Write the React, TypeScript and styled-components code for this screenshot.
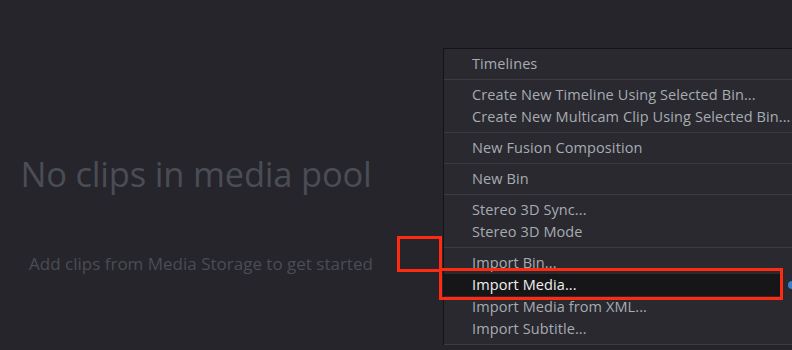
import styled, { createGlobalStyle } from 'styled-components';

interface MenuItem {
  label: string;
  active?: boolean;
}

const groups: MenuItem[][] = [
  [{ label: 'Timelines' }],
  [
    { label: 'Create New Timeline Using Selected Bin...' },
    { label: 'Create New Multicam Clip Using Selected Bin...' },
  ],
  [{ label: 'New Fusion Composition' }],
  [{ label: 'New Bin' }],
  [{ label: 'Stereo 3D Sync...' }, { label: 'Stereo 3D Mode' }],
  [
    { label: 'Import Bin...' },
    { label: 'Import Media...', active: true },
    { label: 'Import Media from XML...' },
    { label: 'Import Subtitle...' },
  ],
];

const App = () => {
  return (
    <>
      <GlobalStyle />
      <Page>
        <EmptyPool>
          <Title>No clips in media pool</Title>
          <Hint>Add clips from Media Storage to get started</Hint>
        </EmptyPool>

        <ContextMenu>
          {groups.map((group, gi) => (
            <Group key={gi}>
              {group.map(item => (
                <Item key={item.label} active={item.active}>
                  {item.label}
                </Item>
              ))}
            </Group>
          ))}
        </ContextMenu>

        <ScrollDot />
        {/* red annotation boxes drawn over the screenshot */}
        <Marker style={{ left: 397, top: 236, width: 45, height: 36 }} />
        <Marker style={{ left: 439, top: 268, width: 344, height: 32 }} />
      </Page>
    </>
  );
};

const GlobalStyle = createGlobalStyle`
  html, body {
    margin: 0;
    padding: 0;
    background: #25252b;
    overflow: hidden;
  }
  * {
    box-sizing: border-box;
  }
`;

const Page = styled.div`
  position: relative;
  width: 792px;
  height: 350px;
  background: #25252b;
  font-family: 'Open Sans', 'Liberation Sans', sans-serif;
  overflow: hidden;
  display: flex;
`;

const EmptyPool = styled.div`
  width: 392px;
  display: flex;
  flex-direction: column;
  align-items: center;
  padding-top: 150px;
  color: #4a4d55;
`;

const Title = styled.div`
  font-size: 34.5px;
  font-weight: 400;
  line-height: 48px;
  letter-spacing: -0.2px;
`;

const Hint = styled.div`
  margin-top: 54px;
  margin-left: 10px;
  font-size: 17px;
  line-height: 24px;
`;

const ContextMenu = styled.div`
  position: absolute;
  left: 443px;
  top: 48px;
  width: 380px;
  background: #29292f;
  border-top: 1px solid #141417;
  border-left: 1px solid #141417;
`;

const Group = styled.div`
  padding: 4px 0;
  border-bottom: 1px solid #3c3c42;
`;

const Item = styled.div<{ active?: boolean }>`
  height: 22px;
  line-height: 22px;
  padding-left: 28px;
  margin-right: ${props => (props.active ? '42px' : '0')};
  font-size: 14.5px;
  letter-spacing: 0.1px;
  white-space: nowrap;
  color: ${props => (props.active ? '#f0f0f0' : '#a7acb3')};
  background: ${props => (props.active ? '#161618' : 'transparent')};
`;

const Marker = styled.div`
  position: absolute;
  border: 3px solid #ff2a12;
  pointer-events: none;
`;

const ScrollDot = styled.div`
  position: absolute;
  left: 788px;
  top: 281px;
  width: 8px;
  height: 8px;
  border-radius: 50%;
  background: #3a7fd0;
`;

export default App;
